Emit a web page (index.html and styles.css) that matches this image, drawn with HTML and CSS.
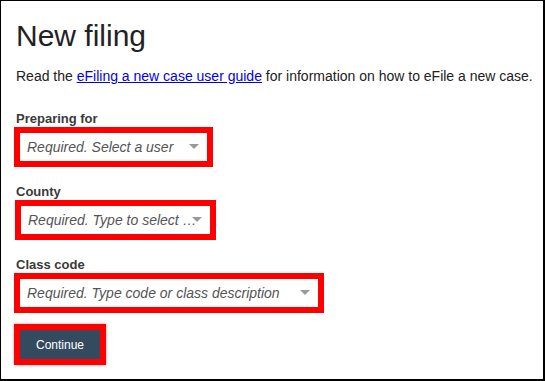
FILE: index.html
```html
<!DOCTYPE html>
<html lang="en">

<head>
    <meta charset="UTF-8">
    <meta name="viewport" content="width=device-width, initial-scale=1.0">
    <title>New filing</title>
    <link rel="stylesheet" href="styles.css">
</head>

<body>
    <div id="page">
        <h1 class="title">New filing</h1>
        <p class="intro">Read the <a href="#">eFiling a new case user guide</a> for information on how to eFile a new case.</p>

        <div class="fields">
            <div class="field">
                <label class="label">Preparing for</label>
                <div class="mark user-box">
                    <div class="select">
                        <span class="placeholder">Required. Select a user</span>
                        <span class="arrow"></span>
                    </div>
                </div>
            </div>

            <div class="field">
                <label class="label">County</label>
                <div class="mark county-box">
                    <div class="select">
                        <span class="placeholder">Required. Type to select …</span>
                        <span class="arrow"></span>
                    </div>
                </div>
            </div>

            <div class="field">
                <label class="label">Class code</label>
                <div class="mark class-box">
                    <div class="select">
                        <span class="placeholder">Required. Type code or class description</span>
                        <span class="arrow"></span>
                    </div>
                </div>
            </div>
        </div>

        <div class="mark button-box">
            <button class="continue">Continue</button>
        </div>
    </div>
</body>

</html>
```

FILE: styles.css
```css
html,
body {
    height: 100%;
    margin: 0;
}

body {
    font-family: "Liberation Sans", Arial, sans-serif;
    background: white;
}

#page {
    box-sizing: border-box;
    height: 381px;
    border: solid black;
    border-width: 1px 2px 2px 1px;
    padding: 18px 0 0 15px;
}

.title {
    margin: 0;
    font-size: 30px;
    line-height: 34px;
    font-weight: normal;
    color: #222;
}

.intro {
    margin: 15px 0 0;
    font-size: 14px;
    line-height: 16px;
    color: #222;
}

.intro a {
    color: #0000ee;
}

.fields {
    display: flex;
    flex-direction: column;
    gap: 17px;
    margin-top: 27px;
}

.field {
    display: flex;
    flex-direction: column;
    gap: 1px;
}

.label {
    font-size: 13px;
    line-height: 15px;
    font-weight: bold;
    color: #3a3a3a;
}

.mark {
    border: 6px solid #ff0000;
    margin-left: -2px;
    background: white;
    align-self: flex-start;
}

.user-box {
    width: 187px;
}

.county-box {
    width: 189px;
    margin-left: -1px;
}

.class-box {
    width: 298px;
}

.select {
    position: relative;
    height: 28px;
    padding: 0 6px 0 7px;
    display: flex;
    align-items: center;
}

.placeholder {
    font-size: 14px;
    font-style: italic;
    color: #555;
    white-space: nowrap;
}

.arrow {
    position: absolute;
    right: 8px;
    top: 11px;
    width: 0;
    height: 0;
    border-left: 5px solid transparent;
    border-right: 5px solid transparent;
    border-top: 5px solid #999;
}

.button-box {
    margin-top: 11px;
    box-shadow: 0 0 3px rgba(0, 0, 0, 0.35);
    width: 80px;
}

.continue {
    display: block;
    width: 80px;
    height: 29px;
    border: 0;
    background: #344b5f;
    color: white;
    font-family: "Liberation Sans", Arial, sans-serif;
    font-size: 12px;
    padding: 0;
}
```
